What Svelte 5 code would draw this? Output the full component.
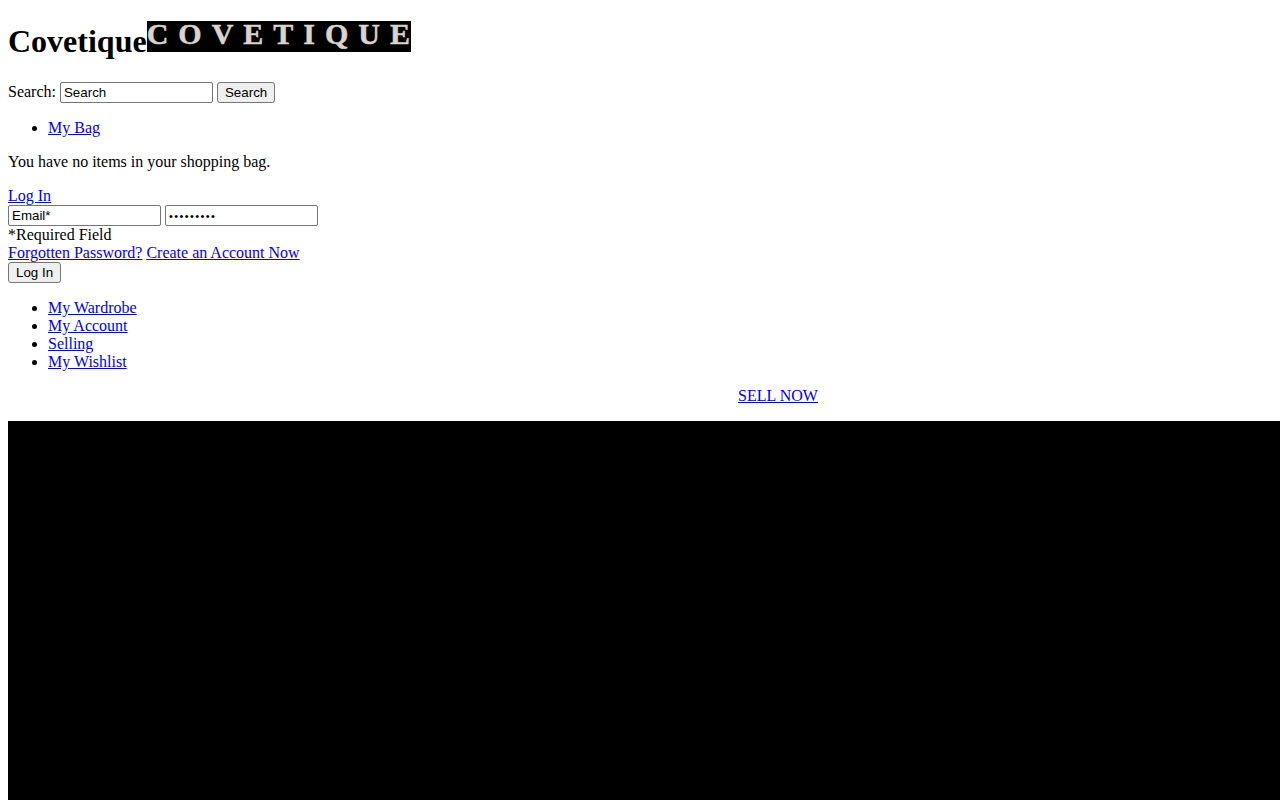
<script>
	const accountLinks = ["My Wardrobe", "My Account", "Selling", "My Wishlist"];
</script>

<div class="page">
	<h1>Covetique<a class="logo" href="#top">COVETIQU<span class="last">E</span></a></h1>

	<form class="search">
		<label for="q">Search:</label>
		<input id="q" type="text" value="Search" />
		<button type="button">Search</button>
	</form>

	<ul>
		<li><a href="#bag">My Bag</a></li>
	</ul>
	<p>You have no items in your shopping bag.</p>

	<div class="login">
		<div><a href="#login">Log In</a></div>
		<div class="fields">
			<input type="text" value="Email*" />
			<input class="pass" type="password" value="password1" />
		</div>
		<div>*Required Field</div>
		<div><a href="#forgot">Forgotten Password?</a> <a href="#create">Create an Account Now</a></div>
		<button type="button">Log In</button>
	</div>

	<ul>
		{#each accountLinks as link}
			<li><a href="#account">{link}</a></li>
		{/each}
	</ul>

	<div class="hero">
		<p class="sell"><a href="#sell">SELL NOW</a></p>
		<div class="black"></div>
	</div>
</div>

<style>
	:global(body) {
		overflow: hidden;
		background: #fff;
	}
	.page {
		margin: 8px;
		font-family: "Liberation Serif", "Times New Roman", serif;
		font-size: 16px;
		color: #000;
		line-height: normal;
	}
	h1 {
		font-size: 32px;
		font-weight: bold;
		margin: 21.44px 0;
	}
	.logo {
		display: inline-block;
		width: 264px;
		height: 31px;
		background: #000;
		color: #dbd3ce;
		font-size: 30px;
		line-height: 26px;
		letter-spacing: 10px;
		-webkit-text-stroke: 0.5px #dbd3ce;
		text-decoration: none;
		vertical-align: 8px;
		white-space: nowrap;
	}
	.last {
		letter-spacing: 0;
	}
	a {
		color: #0000ee;
	}
	input, button {
		font-family: "Liberation Sans", Arial, sans-serif;
		font-size: 13.333px;
	}
	input {
		width: 153px;
		height: 21px;
		box-sizing: border-box;
		padding: 1px 3px;
		border: 1px solid #767676;
		border-radius: 2px;
		color: #000;
		background: #fff;
	}
	.pass {
		font-size: 11px;
		letter-spacing: 1.4px;
	}
	button {
		height: 21px;
		box-sizing: border-box;
		padding: 1px 7px;
		border: 1px solid #767676;
		border-radius: 3px;
		background: #efefef;
		color: #000;
	}
	ul {
		margin: 16px 0;
		padding-left: 40px;
	}
	p {
		margin: 16px 0;
	}
	.hero {
		width: 1540px;
	}
	.sell {
		text-align: center;
	}
	.black {
		height: 500px;
		background: #000;
	}
</style>
